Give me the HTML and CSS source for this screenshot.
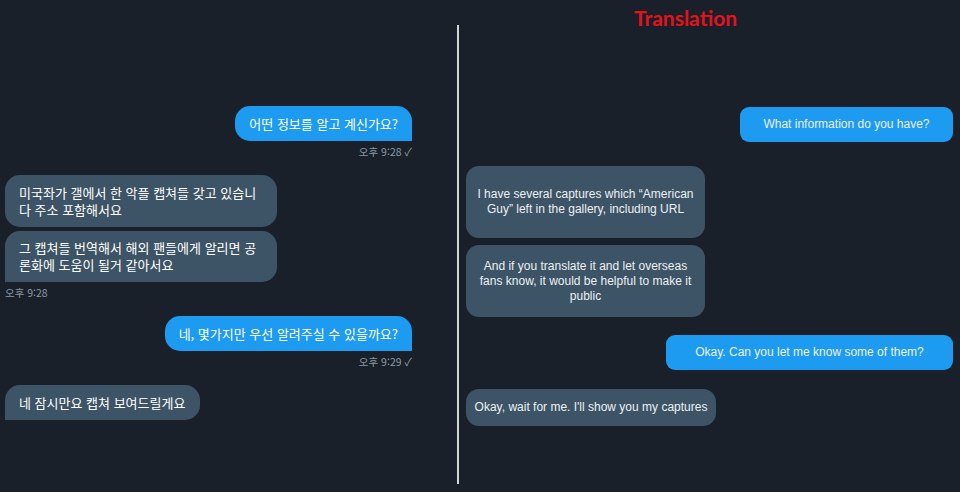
FILE: index.html
```html
<!DOCTYPE html>
<html lang="ko">
<head>
<meta charset="utf-8">
<link rel="stylesheet" href="styles.css">
</head>
<body>
<div class="page">
  <section class="chat">
    <div class="msg out">
      <div class="bubble blue">어떤 정보를 알고 계신가요?</div>
      <div class="meta">오후 9:28 <span class="check">✓</span></div>
    </div>
    <div class="msg in group">
      <div class="bubble gray">미국좌가 갤에서 한 악플 캡쳐들 갖고 있습니<br>다 주소 포함해서요</div>
      <div class="bubble gray last">그 캡쳐들 번역해서 해외 팬들에게 알리면 공<br>론화에 도움이 될거 같아서요</div>
      <div class="meta">오후 9:28</div>
    </div>
    <div class="msg out">
      <div class="bubble blue">네, 몇가지만 우선 알려주실 수 있을까요?</div>
      <div class="meta">오후 9:29 <span class="check">✓</span></div>
    </div>
    <div class="msg in">
      <div class="bubble gray single last">네 잠시만요 캡쳐 보여드릴게요</div>
    </div>
  </section>
  <div class="divider"></div>
  <section class="trans">
    <h1 class="title">Translation</h1>
    <div class="tb tb-blue tb-1">What information do you have?</div>
    <div class="tb tb-gray tb-2">I have several captures which “American<br>Guy” left in the gallery, including URL</div>
    <div class="tb tb-gray tb-3">And if you translate it and let overseas<br>fans know, it would be helpful to make it<br>public</div>
    <div class="tb tb-blue tb-4">Okay. Can you let me know some of them?</div>
    <div class="tb tb-gray tb-5">Okay, wait for me. I'll show you my captures</div>
  </section>
</div>
</body>
</html>
```

FILE: styles.css
```css
* { box-sizing: border-box; }
html, body { margin: 0; padding: 0; }
body {
  background: #19202a;
  width: 960px;
  height: 492px;
  overflow: hidden;
  color: #ffffff;
}
.page {
  display: flex;
  height: 492px;
}
.chat {
  width: 457px;
  padding: 106px 45px 0 5px;
  display: flex;
  flex-direction: column;
  font-family: "Noto Sans CJK KR", "Noto Sans", sans-serif;
}
.msg {
  display: flex;
  flex-direction: column;
}
.msg.out { align-items: flex-end; margin-bottom: 17px; }
.msg.in { align-items: flex-start; margin-bottom: 17px; }
.bubble {
  font-size: 13px;
  line-height: 17px;
  padding: 9px 14px;
  border-radius: 15px;
  white-space: nowrap;
}
.bubble.blue {
  background: #1d9bf0;
  border-bottom-right-radius: 0;
}
.bubble.gray {
  background: #3d5466;
  width: 272px;
}
.group .bubble.gray { margin-bottom: 4px; }
.group .bubble.gray.last { padding: 8px 14px 9px; }
.bubble.gray.last { border-bottom-left-radius: 0; }
.bubble.gray.single { width: 195px; }
.meta {
  font-family: "Noto Sans CJK KR", "Liberation Sans", sans-serif;
  font-size: 10.5px;
  color: #8a98a5;
  margin-top: 4px;
  line-height: 13px;
}
.group .meta { margin-top: 0; }
.check { font-size: 11px; }
.divider {
  width: 2px;
  margin-top: 25px;
  height: 459px;
  background: #d4d4d4;
}
.trans {
  flex: 1;
  display: flex;
  flex-direction: column;
  padding: 0 7px 0 7px;
  font-family: "Liberation Sans", Arial, sans-serif;
  font-size: 12px;
  line-height: 15px;
}
.title {
  margin: 6px 0 0 168px;
  font-family: "Lato", "Noto Sans", sans-serif;
  font-weight: 700;
  font-size: 21px;
  line-height: 24px;
  color: #e3131c;
}
.tb {
  text-align: center;
  border-radius: 9px;
  color: #ecf0f3;
  white-space: nowrap;
}
.tb-blue { background: #1d9bf0; align-self: flex-end; }
.tb-gray { background: #3d5466; align-self: flex-start; border-radius: 13px; }
.tb-1 { margin-top: 77px; width: 213px; padding: 10px 0; }
.tb-2 { margin-top: 24px; width: 239px; height: 72px; padding: 21px 0; }
.tb-3 { margin-top: 7px; width: 239px; height: 72px; padding: 14px 0; }
.tb-4 { margin-top: 18px; width: 287px; padding: 10px 0; }
.tb-5 { margin-top: 19px; width: 250px; padding: 11px 0; }
```
